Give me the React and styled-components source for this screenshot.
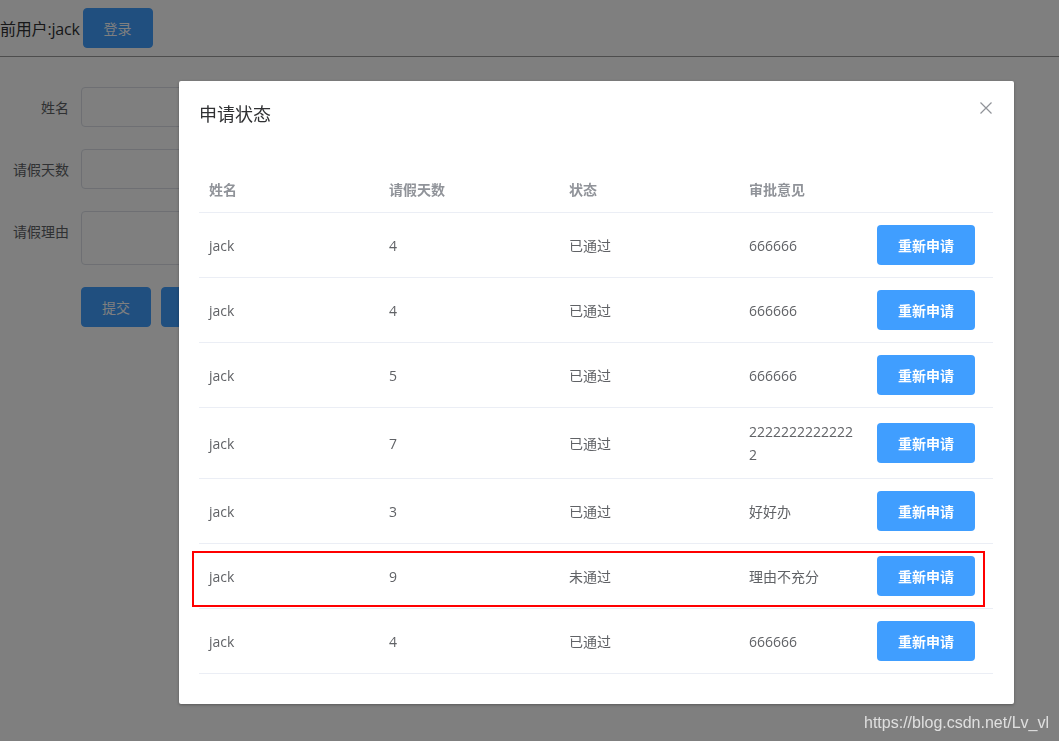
import styled, { createGlobalStyle } from 'styled-components';

const rows = [
  { name: 'jack', days: 4, status: '已通过', remark: '666666' },
  { name: 'jack', days: 4, status: '已通过', remark: '666666' },
  { name: 'jack', days: 5, status: '已通过', remark: '666666' },
  { name: 'jack', days: 7, status: '已通过', remark: '22222222222222' },
  { name: 'jack', days: 3, status: '已通过', remark: '好好办' },
  { name: 'jack', days: 9, status: '未通过', remark: '理由不充分' },
  { name: 'jack', days: 4, status: '已通过', remark: '666666' },
];

const GlobalStyle = createGlobalStyle`
  html, body {
    margin: 0;
    padding: 0;
    background: #fff;
    font-family: "Open Sans", "Noto Sans CJK SC", sans-serif;
  }
  * { box-sizing: border-box; }
`;

const App = () => (
  <>
    <GlobalStyle />
    <Page>
      <Header>
        <UserText>前用户:jack</UserText>
        <PrimaryButton>登录</PrimaryButton>
      </Header>
      <Form>
        <FormRow>
          <Label>姓名</Label>
          <Input />
        </FormRow>
        <FormRow>
          <Label>请假天数</Label>
          <Input />
        </FormRow>
        <FormRow>
          <Label>请假理由</Label>
          <TextArea />
        </FormRow>
        <FormRow>
          <Label />
          <PrimaryButton>提交</PrimaryButton>
          <PrimaryButton>重置</PrimaryButton>
        </FormRow>
      </Form>
    </Page>

    <Mask />

    <Dialog>
      <DialogHeader>
        <DialogTitle>申请状态</DialogTitle>
        <CloseButton>
          <svg width="12" height="12" viewBox="0 0 12 12">
            <path d="M0.5 0.5 L11.5 11.5 M11.5 0.5 L0.5 11.5" stroke="#909399" strokeWidth="1.2" fill="none" />
          </svg>
        </CloseButton>
      </DialogHeader>
      <DialogBody>
        <Table>
          <colgroup>
            <col width="180" />
            <col width="180" />
            <col width="180" />
            <col width="128" />
            <col width="126" />
          </colgroup>
          <thead>
            <tr>
              <Th>姓名</Th>
              <Th>请假天数</Th>
              <Th>状态</Th>
              <Th>审批意见</Th>
              <Th />
            </tr>
          </thead>
          <tbody>
            {rows.map((r, i) => (
              <tr key={i}>
                <Td><Cell>{r.name}</Cell></Td>
                <Td><Cell>{r.days}</Cell></Td>
                <Td><Cell>{r.status}</Cell></Td>
                <Td><Cell $wrap>{r.remark}</Cell></Td>
                <Td><Cell><ActionButton>重新申请</ActionButton></Cell></Td>
              </tr>
            ))}
          </tbody>
        </Table>
      </DialogBody>
    </Dialog>

    <Highlight />
    <Watermark>https://blog.csdn.net/Lv_vl</Watermark>
  </>
);

const Page = styled.div`
  width: 1059px;
  height: 741px;
  overflow: hidden;
`;

const Header = styled.div`
  display: flex;
  align-items: center;
  gap: 3px;
  height: 57px;
  padding-bottom: 1px;
  border-bottom: 1px solid #9a9a9a;
`;

const UserText = styled.span`
  font-size: 16px;
  color: #303133;
  font-family: "Open Sans", "Noto Sans CJK SC", sans-serif;
  letter-spacing: -0.2px;
`;

const PrimaryButton = styled.button`
  width: 70px;
  height: 40px;
  border: 1px solid #409eff;
  border-radius: 4px;
  background: #409eff;
  color: #fff;
  font-size: 14px;
  font-family: "Noto Sans CJK SC", sans-serif;
  padding: 0;
`;

const Form = styled.div`
  display: flex;
  flex-direction: column;
  gap: 22px;
  padding-top: 30px;
`;

const FormRow = styled.div`
  display: flex;
  align-items: flex-start;
  gap: 10px;
`;

const Label = styled.label`
  width: 71px;
  text-align: right;
  padding-right: 2px;
  line-height: 40px;
  font-size: 14px;
  color: #606266;
  font-family: "Noto Sans CJK SC", sans-serif;
`;

const Input = styled.div`
  width: 320px;
  height: 40px;
  border: 1px solid #dcdfe6;
  border-radius: 4px;
  background: #fff;
`;

const TextArea = styled(Input)`
  height: 54px;
`;

const Mask = styled.div`
  position: fixed;
  inset: 0;
  background: rgba(0, 0, 0, 0.5);
`;

const Dialog = styled.div`
  position: absolute;
  left: 179px;
  top: 81px;
  width: 835px;
  background: #fff;
  border-radius: 2px;
  box-shadow: 0 1px 3px rgba(0, 0, 0, 0.3);
`;

const DialogHeader = styled.div`
  position: relative;
  padding: 20px 20px 10px;
`;

const DialogTitle = styled.span`
  font-size: 18px;
  line-height: 24px;
  color: #303133;
  font-family: "Noto Sans CJK SC", sans-serif;
`;

const CloseButton = styled.button`
  position: absolute;
  top: 21px;
  right: 22px;
  border: none;
  background: transparent;
  padding: 0;
  display: flex;
`;

const DialogBody = styled.div`
  padding: 30px 20px;
`;

const Table = styled.table`
  width: 794px;
  border-collapse: collapse;
  table-layout: fixed;
  font-size: 14px;
  color: #606266;
`;

const Th = styled.th`
  padding: 12px 10px;
  text-align: left;
  font-weight: bold;
  color: #909399;
  line-height: 22px;
  border-bottom: 1px solid #ebeef5;
  font-family: "Noto Sans CJK SC", sans-serif;
`;

const Td = styled.td`
  padding: 12px 0;
  border-bottom: 1px solid #ebeef5;
  vertical-align: middle;
`;

const Cell = styled.div`
  padding: 0 10px;
  line-height: 23px;
  word-break: ${(p) => (p.$wrap ? 'break-all' : 'normal')};
  display: flex;
  align-items: center;
  min-height: 40px;
`;

const ActionButton = styled.button`
  width: 98px;
  height: 40px;
  border: none;
  border-radius: 4px;
  background: #409eff;
  color: #fff;
  font-size: 14px;
  font-weight: 600;
  font-family: "Noto Sans CJK SC", sans-serif;
  padding: 0;
`;

const Highlight = styled.div`
  position: absolute;
  left: 192px;
  top: 551px;
  width: 793px;
  height: 56px;
  border: 2px solid #ff0000;
`;

const Watermark = styled.div`
  position: absolute;
  right: 10px;
  bottom: 9px;
  font-size: 16px;
  font-family: "Liberation Sans", Arial, sans-serif;
  color: rgba(255, 255, 255, 0.75);
`;

export default App;
